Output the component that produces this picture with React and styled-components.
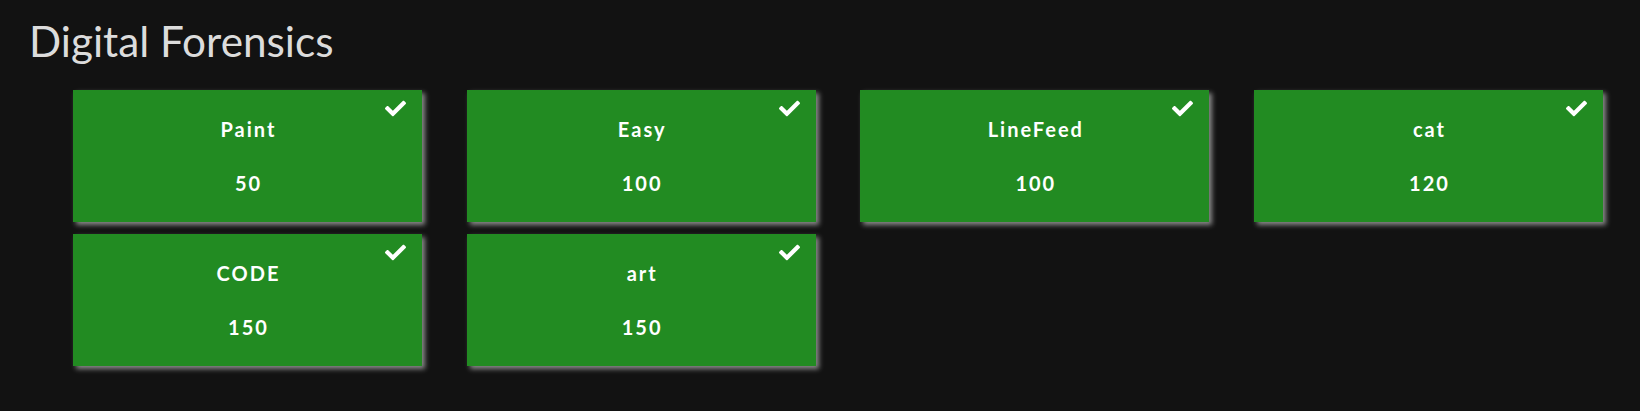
import React from "react";
import styled, { createGlobalStyle } from "styled-components";
import { FaCheck } from "react-icons/fa";

const GlobalStyle = createGlobalStyle`
  html, body {
    margin: 0;
    padding: 0;
    background: #121212;
  }
  body {
    font-family: Lato, "Open Sans", sans-serif;
  }
`;

const Page = styled.div`
  width: 1640px;
  height: 411px;
  background: #121212;
  box-sizing: border-box;
  padding: 14px 0 0 0;
`;

const Title = styled.h1`
  margin: 0 0 0 29px;
  font-family: Lato, sans-serif;
  font-weight: 400;
  font-size: 42.3px;
  line-height: 54px;
  color: #dcdcdc;
`;

const Grid = styled.div`
  display: grid;
  grid-template-columns: repeat(4, 349px);
  column-gap: 44.67px;
  row-gap: 12px;
  margin: 22px 0 0 73px;
`;

const Card = styled.div`
  position: relative;
  height: 132px;
  background: ${(p) => (p.$solved ? "#228b22" : "#2a2a2a")};
  box-shadow: 3px 3px 5px #8a8a8a;
  display: flex;
  flex-direction: column;
  align-items: center;
  padding-top: 27px;
  padding-left: 2px;
  box-sizing: border-box;
  color: #ffffff;
`;

const Label = styled.div`
  font-weight: 700;
  font-size: 20px;
  line-height: 24px;
  letter-spacing: 2px;
  margin-top: ${(p) => p.$gap || 0}px;
`;

const Check = styled.span`
  position: absolute;
  top: 8px;
  right: 16px;
  display: flex;
  color: #ffffff;
`;

const challenges = [
  { name: "Paint", points: 50 },
  { name: "Easy", points: 100 },
  { name: "LineFeed", points: 100 },
  { name: "cat", points: 120 },
  { name: "CODE", points: 150 },
  { name: "art", points: 150 },
];

export default function App() {
  return (
    <>
      <GlobalStyle />
      <Page>
        <Title>Digital Forensics</Title>
        <Grid>
          {challenges.map((c) => (
            <Card key={c.name} $solved>
              <Check>
                <FaCheck size={21} />
              </Check>
              <Label>{c.name}</Label>
              <Label $gap={30}>{c.points}</Label>
            </Card>
          ))}
        </Grid>
      </Page>
    </>
  );
}
